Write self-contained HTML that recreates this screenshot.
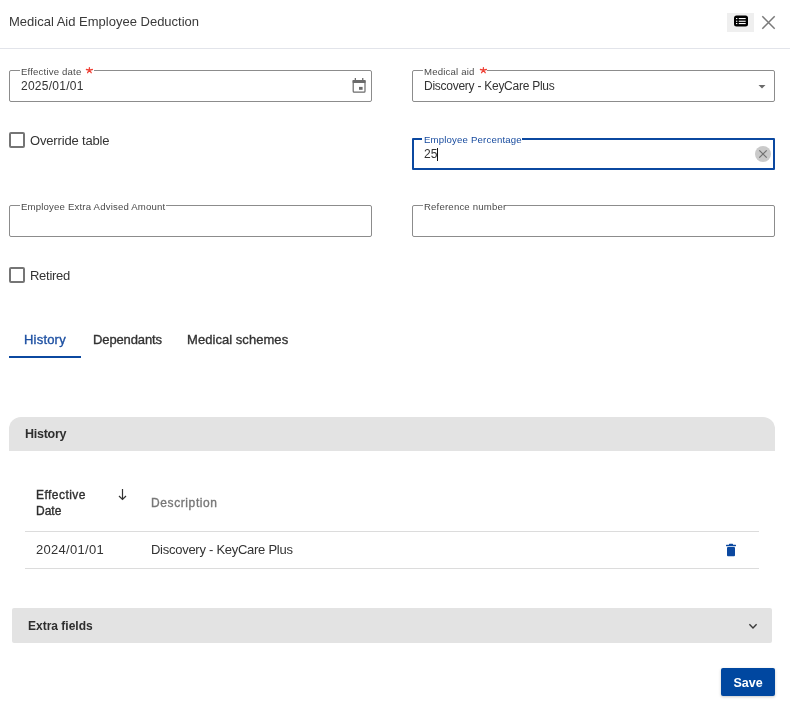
<!DOCTYPE html>
<html><head><meta charset="utf-8">
<style>
*{box-sizing:border-box;margin:0;padding:0}
html,body{width:790px;height:718px;overflow:hidden;background:#fff;font-family:"Liberation Sans",sans-serif;color:#333}
.a{position:absolute}
.t{position:absolute;white-space:nowrap;line-height:1;will-change:transform}
.box{position:absolute;border:1px solid #8c8c8c;border-radius:2px}
.lblbg{position:absolute;background:#fff;height:4px}
.lbl{position:absolute;will-change:transform;white-space:nowrap;line-height:1;font-size:9.6px;letter-spacing:0.18px;color:#4a4a4a}
.req{position:absolute}
.cb{position:absolute;width:16px;height:16px;border:2px solid #757575;border-radius:2px}
.med{-webkit-text-stroke:0.35px currentColor}
</style></head><body>
<!-- header -->
<div class="t" style="left:9px;top:15px;font-size:13px;color:#3a3a3a">Medical Aid Employee Deduction</div>
<div class="a" style="left:727px;top:13px;width:27px;height:19px;background:#efefef"></div>
<svg class="a" style="left:734px;top:15px" width="14" height="12" viewBox="0 0 14 12">
<rect x="0" y="0.5" width="14" height="11" rx="2.5" fill="#000"/>
<rect x="2" y="3" width="1.3" height="1.1" fill="#fff"/><rect x="4.8" y="3" width="6.9" height="1.1" fill="#fff"/>
<rect x="2" y="5.7" width="1.3" height="1.1" fill="#fff"/><rect x="4.8" y="5.7" width="6.9" height="1.1" fill="#fff"/>
<rect x="2" y="8" width="1.3" height="1.1" fill="#fff"/><rect x="4.8" y="8" width="6.9" height="1.1" fill="#fff"/>
</svg>
<svg class="a" style="left:761px;top:15px" width="15" height="15" viewBox="0 0 15 15">
<path d="M1.3 1.3L13.7 13.7M13.7 1.3L1.3 13.7" stroke="#7a7a7a" stroke-width="1.5"/>
</svg>
<div class="a" style="left:0;top:48px;width:790px;height:1px;background:#e2e4ea"></div>

<!-- Effective date -->
<div class="box" style="left:9px;top:70px;width:363px;height:32px"></div>
<div class="lblbg" style="left:20px;top:68px;width:74px"></div>
<div class="lbl" style="left:21px;top:67px">Effective date</div>
<svg class="a" style="left:84px;top:65px" width="12" height="10" viewBox="0 0 12 10"><path d="M5.4 5.2V2.7M5.4 5.2L2.4 4.5M5.4 5.2L8.4 4.5M5.4 5.2L3.6 7.7M5.4 5.2L7.2 7.7" stroke="#ef4136" stroke-width="1.3" stroke-linecap="round"/></svg>
<div class="t" style="left:21px;top:80px;font-size:12px;letter-spacing:0.25px">2025/01/01</div>
<svg class="a" style="left:352px;top:78px" width="14" height="15" viewBox="0 0 14 15">
<rect x="2.7" y="0" width="1.3" height="2.5" fill="#6b6b6b"/><rect x="10.1" y="0" width="1.3" height="2.5" fill="#6b6b6b"/>
<rect x="1.2" y="2.6" width="11.8" height="11.5" rx="0.9" fill="none" stroke="#6b6b6b" stroke-width="1.2"/>
<rect x="0.6" y="2" width="13" height="2.9" rx="0.6" fill="#6b6b6b"/>
<rect x="7" y="8.9" width="3.6" height="2.9" fill="#6b6b6b"/>
</svg>

<!-- Medical aid -->
<div class="box" style="left:412px;top:70px;width:363px;height:32px"></div>
<div class="lblbg" style="left:423px;top:68px;width:64px"></div>
<div class="lbl" style="left:424px;top:67px">Medical aid</div>
<svg class="a" style="left:478px;top:65px" width="12" height="10" viewBox="0 0 12 10"><path d="M5.4 5.2V2.7M5.4 5.2L2.4 4.5M5.4 5.2L8.4 4.5M5.4 5.2L3.6 7.7M5.4 5.2L7.2 7.7" stroke="#ef4136" stroke-width="1.3" stroke-linecap="round"/></svg>
<div class="t" style="left:424px;top:80px;font-size:12px;letter-spacing:-0.26px">Discovery - KeyCare Plus</div>
<svg class="a" style="left:758px;top:85px" width="8" height="4" viewBox="0 0 8 4"><path d="M0.5 0H7.5L4 3.6Z" fill="#6a6a6a"/></svg>

<!-- Override -->
<div class="cb" style="left:9px;top:132px"></div>
<div class="t" style="left:30px;top:134px;font-size:13px;letter-spacing:-0.16px">Override table</div>

<!-- Employee Percentage -->
<div class="a" style="left:412px;top:138px;width:363px;height:32px;border:2px solid #0b48a0;border-radius:1px"></div>
<div class="lblbg" style="left:422px;top:137px;width:100px"></div>
<div class="lbl" style="left:424px;top:135px;color:#164a9e">Employee Percentage</div>
<div class="t" style="left:424px;top:148px;font-size:12px">25</div>
<div class="a" style="left:437px;top:148px;width:1px;height:13px;background:#111"></div>
<div class="a" style="left:755px;top:146px;width:16px;height:16px;border-radius:50%;background:#cacaca"></div>
<svg class="a" style="left:755px;top:146px" width="16" height="16" viewBox="0 0 16 16"><path d="M4.3 4.3L11.7 11.7M11.7 4.3L4.3 11.7" stroke="#717171" stroke-width="1.2"/></svg>

<!-- Extra advised / Reference -->
<div class="box" style="left:9px;top:205px;width:363px;height:32px"></div>
<div class="lblbg" style="left:20px;top:203px;width:146px"></div>
<div class="lbl" style="left:21px;top:202px">Employee Extra Advised Amount</div>
<div class="box" style="left:412px;top:205px;width:363px;height:32px"></div>
<div class="lblbg" style="left:423px;top:203px;width:83px"></div>
<div class="lbl" style="left:424px;top:202px">Reference number</div>

<!-- Retired -->
<div class="cb" style="left:9px;top:267px"></div>
<div class="t" style="left:30px;top:269px;font-size:13px;letter-spacing:-0.28px">Retired</div>

<!-- Tabs -->
<div class="t med" style="left:24px;top:333px;font-size:13px;letter-spacing:0.2px;color:#1d50a2">History</div>
<div class="t med" style="left:93px;top:333px;font-size:13px;letter-spacing:-0.12px;color:#333">Dependants</div>
<div class="t med" style="left:187px;top:333px;font-size:13px;letter-spacing:0.05px;color:#333">Medical schemes</div>
<div class="a" style="left:9px;top:356px;width:72px;height:2px;background:#0b48a0"></div>

<!-- History panel -->
<div class="a" style="left:9px;top:417px;width:766px;height:34px;background:#e3e3e3;border-radius:12px 12px 0 0"></div>
<div class="t" style="left:25px;top:428px;font-size:12.5px;font-weight:bold;letter-spacing:-0.27px;color:#2e2e2e">History</div>

<div class="t med" style="left:36px;top:487px;font-size:12px;line-height:16px;color:#2e2e2e"><span style="letter-spacing:0.45px">Effective</span><br>Date</div>
<svg class="a" style="left:118px;top:488px" width="9" height="13" viewBox="0 0 9 13"><path d="M4.5 1V11.5M1 8L4.5 11.5L8 8" stroke="#333" stroke-width="1.2" fill="none"/></svg>
<div class="t med" style="left:151px;top:497px;font-size:12px;color:#777;letter-spacing:0.6px">Description</div>
<div class="a" style="left:25px;top:531px;width:734px;height:1px;background:#dcdcdc"></div>
<div class="t" style="left:36px;top:543px;font-size:13px;letter-spacing:0.29px">2024/01/01</div>
<div class="t" style="left:151px;top:543px;font-size:13px;letter-spacing:-0.27px">Discovery - KeyCare Plus</div>
<svg class="a" style="left:726px;top:543px" width="10" height="14" viewBox="0 0 10 14">
<rect x="3" y="0.8" width="4" height="1.5" rx="0.5" fill="#0b48a0"/>
<rect x="0" y="1.8" width="10" height="1.4" rx="0.4" fill="#0b48a0"/>
<rect x="1" y="4" width="8" height="9.2" rx="1" fill="#0b48a0"/>
</svg>
<div class="a" style="left:25px;top:568px;width:734px;height:1px;background:#dcdcdc"></div>

<!-- Extra fields -->
<div class="a" style="left:12px;top:608px;width:760px;height:35px;background:#e3e3e3;border-radius:2px"></div>
<div class="t" style="left:28px;top:620px;font-size:12px;font-weight:bold;color:#2e2e2e">Extra fields</div>
<svg class="a" style="left:748px;top:623px" width="10" height="7" viewBox="0 0 10 7"><path d="M1.4 1.3L5 4.9L8.6 1.3" stroke="#3a3a3a" stroke-width="1.4" fill="none"/></svg>

<!-- Save -->
<div class="a" style="left:721px;top:668px;width:54px;height:28px;background:#0047a0;border-radius:2px;box-shadow:0 1px 3px rgba(0,0,0,.22)"></div>
<div class="t" style="left:721px;top:677px;width:54px;text-align:center;font-size:12.5px;font-weight:bold;color:#fff">Save</div>
</body></html>
